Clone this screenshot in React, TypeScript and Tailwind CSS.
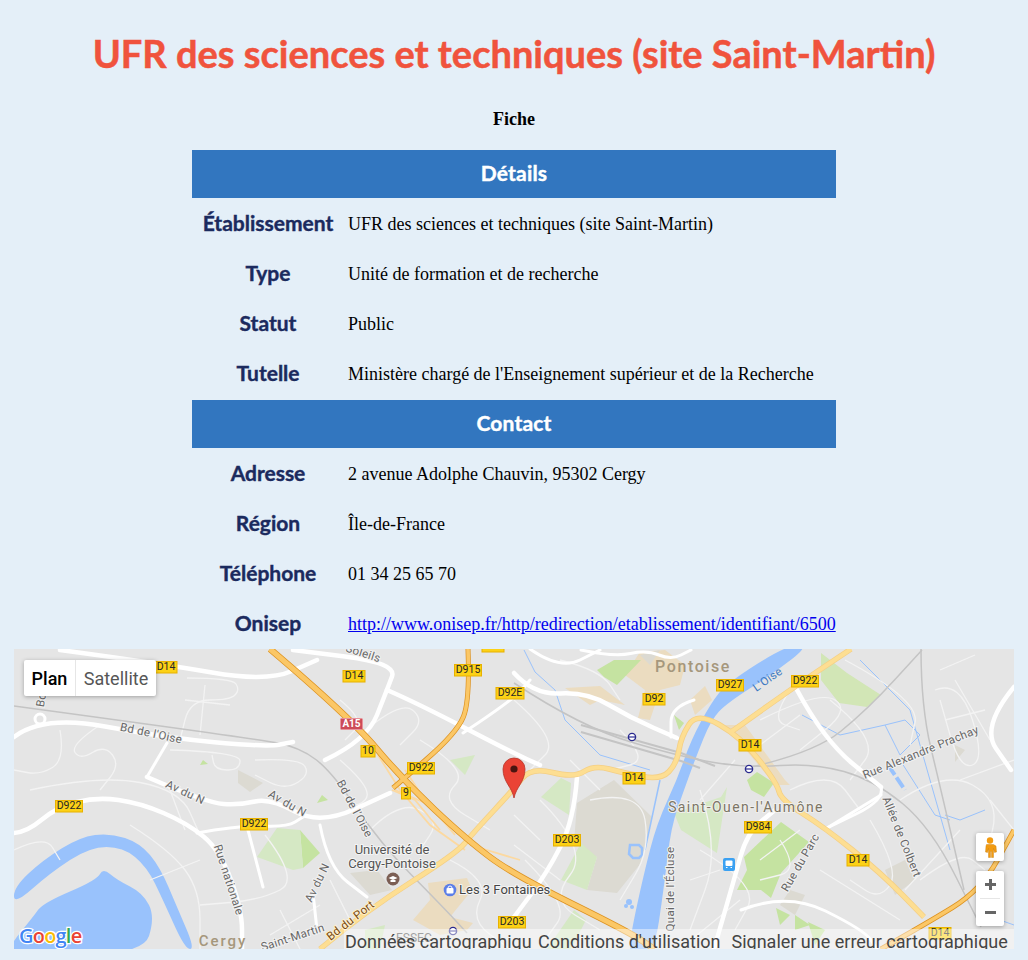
import React from "react";

const rows1 = [
  ["Établissement", "UFR des sciences et techniques (site Saint-Martin)"],
  ["Type", "Unité de formation et de recherche"],
  ["Statut", "Public"],
  ["Tutelle", "Ministère chargé de l'Enseignement supérieur et de la Recherche"],
];
const rows2 = [
  ["Adresse", "2 avenue Adolphe Chauvin, 95302 Cergy"],
  ["Région", "Île-de-France"],
  ["Téléphone", "01 34 25 65 70"],
];

// Turns "M x y L x y ..." map traces into smooth curves through segment midpoints.
function smooth(d: string) {
  return d
    .split("M")
    .filter(Boolean)
    .map((part) => {
      const closed = part.includes("Z");
      const pts = part
        .replace("Z", "")
        .split("L")
        .map((p) => p.trim().split(/\s+/).map(Number));
      if (pts.length < 3) return "M" + part;
      let out = closed
        ? `M${(pts[0][0] + pts[pts.length - 1][0]) / 2} ${(pts[0][1] + pts[pts.length - 1][1]) / 2}`
        : `M${pts[0][0]} ${pts[0][1]}`;
      const last = closed ? pts.length : pts.length - 1;
      for (let i = closed ? 0 : 1; i < last; i++) {
        const n = pts[(i + 1) % pts.length];
        out += `Q${pts[i][0]} ${pts[i][1]} ${(pts[i][0] + n[0]) / 2} ${(pts[i][1] + n[1]) / 2}`;
      }
      if (!closed) out += `L${pts[pts.length - 1][0]} ${pts[pts.length - 1][1]}`;
      else out += "Z";
      return out;
    })
    .join("");
}

const thin = [
  "M187 678L232 678L240 690L230 700L190 700L180 740", "M100 725L70 745L80 760L105 745L120 765L100 790", "M60 730L65 760L40 775L14 770", "M205 685L200 735M185 700L230 705",
  "M170 750L240 752L240 770L215 770L212 755", "M255 760L300 758L310 775L285 790L255 775", "M30 790L100 775L180 790L200 835", "M14 850L45 835L60 860M130 825L170 850L200 890L200 949",
  "M265 835L300 880L260 900L200 905", "M340 760L375 790L355 810L340 790M360 735L400 700L425 720L400 745", "M370 830L400 800L440 820L420 850", "M170 790L185 830M150 880L200 860",
  "M280 910L300 949M330 880L350 920M270 935L320 905", "M420 740L470 770L440 800L490 830", "M450 860L490 880L470 920L510 949", "M540 800L590 850L550 900L600 930", "M525 860L570 905L545 940", "M340 700L365 720L345 740",
  "M590 800L640 790L650 850L620 900", "M700 800L735 760M700 850L760 885L735 930", "M830 700L880 740L850 780M845 660L920 700L910 745", "M935 690L960 680L985 760L960 770L940 700", "M514 815L540 840M514 845L560 880",
  "M955 680L990 740M945 720L985 710", "M900 800L945 770L1000 800L985 860", "M870 820L900 870L880 900L850 880", "M760 720L820 690L850 710L800 750", "M790 790L830 770L860 810", "M820 870L900 920M905 890L960 830",
  "M960 780L1014 760M990 800L1014 830", "M514 700L560 740L530 770M560 660L600 670L620 700", "M620 730L650 760L610 770", "M700 790L720 850L690 930M740 900L680 949", "M600 790L570 760M690 880L720 870", "M780 840L800 870L760 880M760 860L800 830",
  "M790 690L770 720L800 730M760 745L800 715", "M940 670L975 655M920 880L960 850L985 870",
];

const whiteMain = [
  "M14 737L43 715L167 738L267 747L293 742", "M325 760L367 740L387 690L397 663L293 650", "M387 690L417 703L513 753L540 765", "M14 833L27 832L57 807L97 797L140 803L187 823L220 850L242 910L242 949", "M60 650L157 663L267 682L317 660",
  "M797 690L824 740L881 787", "M1014 687L981 727L1011 770", "M714 949L734 880L747 833L775 810", "M577 777L574 820L547 873L514 917", "M514 673L534 695L587 692L631 718L677 738", "M147 777L207 803L240 805L270 798L320 825L390 793",
];
const whiteMinor = [
  "M463 733L513 700L530 680", "M147 777L167 743", "M320 825L328 867L367 897", "M197 833L240 825L287 827L303 817", "M248 830L263 887", "M313 893L317 930",
  "M827 828L881 795", "M741 910L787 892L864 930L877 949", "M581 650L614 657L647 650L671 660L691 650", "M694 700L671 707L671 737", "M881 787L885 800L827 828", "M530 649L560 670L600 650",
];

const yellow = [
  "M320 949L367 910L457 853L473 833L513 790L531 767L574 778L594 765L624 773L661 780L677 763L681 737L697 712L741 737L777 783L781 800L824 827L881 873L924 917",
  "M731 732L794 687L851 649",
];

const shields: [string, number, number, number][] = [
  ["D14", 166, 667, 21], ["D14", 354, 676, 21], ["D915", 468, 670, 26], ["D92E", 510, 693, 27], ["D922", 69, 806, 26], ["D922", 254, 824, 26], ["D922", 421, 768, 26],
  ["10", 368, 751, 13], ["9", 406, 793, 8], ["D203", 512, 922, 26], ["D92", 654, 699, 21], ["D927", 730, 685, 26], ["D922", 805, 681, 26], ["D14", 750, 745, 21],
  ["D14", 634, 778, 21], ["D984", 758, 827, 26], ["D203", 567, 840, 26], ["D14", 858, 860, 21], ["D14", 940, 933, 21], ["D14", 493, 646, 21],
];

const labels: [string, number, number, number][] = [
  ["Bd de l'Oise", 151, 734, 12], ["Av du N", 185, 793, 25], ["Av du N", 287, 804, 30], ["Bd de l'Oise", 354, 809, 62], ["Rue nationale", 228, 880, 72], ["Av du N", 318, 883, -64],
  ["Saint-Martin", 293, 938, -18], ["Rue Alexandre Prachay", 921, 753, -22], ["Allée de Colbert", 901, 837, 68], ["Rue du Parc", 801, 863, -60], ["Quai de l'Écluse", 671, 889, -90], ["Bd", 42, 700, -80], ["Soleils", 363, 654, 18],
];

const motorway = [
  "M270 649L350 717L403 780L467 840L514 875L631 933L654 949",
  "M468 649L470 700L457 733L393 788",
  "M881 949L924 925L981 890L1014 830",
];

function MapArt() {
  return (
    <svg viewBox="14 649 1000 300" className="block w-full h-full" aria-hidden="true">
      <rect x="14" y="649" width="1000" height="300" fill="#e5e5e5" />
      {/* built-up areas */}
      <g fill="#ebdcc0">
        <path d="M640 652L665 650L685 665L680 685L660 690L650 720L638 718L645 690L625 675Z" />
        <path d="M565 688L600 686L625 705L600 700L590 705Z" />
        <path d="M690 700L705 686L712 700L695 715Z" />
        <path d="M428 883L467 878L472 890L450 917L473 923L467 930L440 935L413 920L430 900Z" />
        <path d="M725 725L745 725L785 780L790 785L775 785Z" />
      </g>
      <g fill="#dcdad2">
        <path d="M577 803L614 780L652 817L641 863L617 893L587 890L597 857L574 843Z" />
        <path d="M238 770L263 783L250 792L238 783Z" />
        <path d="M350 873L377 870L392 890L370 895Z" />
        <path d="M790 890L805 895L795 915L780 905Z" />
        <path d="M885 870L905 860L915 880L895 895Z" />
        <path d="M640 655L660 650L650 665Z" />
        <path d="M955 745L965 750L955 762Z" />
      </g>
      {/* parks */}
      <g fill="#c5e3a1">
        <path d="M597 670L614 660L641 660L617 685L604 677Z" />
        <path d="M781 822L809 842L781 873L771 898L761 890L737 890L747 870L744 857Z" />
        <path d="M300 830L320 853L303 868Z" />
        <path d="M747 780L757 772L774 783L764 797L751 790Z" />
        <path d="M674 715L684 723L679 730Z" />
        <path d="M203 760L208 764L200 765ZM322 795L328 800L317 803Z" />
        <path d="M776 908L790 915L780 925ZM795 915L810 925L795 930ZM808 922L825 930L815 945Z" />
      </g>
      <path d="M821 653L847 673L881 695L867 707L839 703L821 680Z" fill="#d2e6b6" />
      <g fill="#d5e8c4">
        <path d="M257 857L277 828L300 830L303 868L293 870Z" />
        <path d="M541 797L561 778L571 783L569 815Z" />
        <path d="M674 813L721 797L727 787L717 853L681 830Z" />
        <path d="M561 880L581 843L597 857L587 890Z" />
        <path d="M574 910L547 949L571 949L586 920Z" />
        <path d="M450 760L475 755L465 775Z" />
        <path d="M365 930L385 925L380 949L365 949Z" />
      </g>
      {/* water */}
      <g fill="#99c2fc">
        <path d={smooth("M14 887L43 860L80 837L110 833L140 843L160 867L177 907L195 949L185 949L163 900L147 867L123 847L90 847L50 873L14 905Z")} />
        <path d={smooth("M10 945L33 917L43 903L97 880L103 868L117 880L143 893L155 917L143 955L10 955Z")} />
        <path d={smooth("M787 645L727 683L711 703L691 740L677 780L657 823L644 873L631 933L629 955L654 955L664 887L671 827L684 790L696 757L711 720L727 703L774 673L810 645Z")} />
      </g>
      <g fill="none" stroke="#99c2fc" strokeWidth="1">
        <path d="M524 650L535 672L555 690L565 720L600 755L650 770" />
        <path d="M802 715L840 735L885 725L905 720L920 735L900 755L885 725" />
        <path d="M860 660L890 690L910 710L950 850M945 815L960 820L985 810" />
        <path d="M1000 920L1014 925" />
        <path d="M900 760L935 815L950 820" />
        <path d="M660 780L645 850" strokeWidth="1.5" />
      </g>
      <path d="M630 845h9l3 3v7l-3 3h-6l-4-4z" fill="none" stroke="#99c2fc" strokeWidth="2.5" />
      <circle cx="629" cy="902" r="3" fill="#99c2fc" />
      <circle cx="626" cy="906" r="2" fill="#99c2fc" /><circle cx="632" cy="907" r="2" fill="#99c2fc" />
      <path d="M888 765L905 790" stroke="#99c2fc" strokeWidth="4" strokeDasharray="12 3" fill="none" />
      {/* thin roads */}
      <g fill="none" stroke="#f3f3f3" strokeWidth="1.3">
        {thin.map((d, i) => <path key={i} d={smooth(d)} />)}
      </g>
      {/* railways */}
      <g fill="none" stroke="#c4c4c4" strokeWidth="1.5">
        <path d={smooth("M14 706L250 738L300 747L333 773L380 843L443 907L467 933")} />
        <path d={smooth("M514 683L581 727L681 757L747 768L814 763L874 780L931 827L981 927")} />
        <path d="M581 732L681 761L700 768M581 725L681 753L715 766" strokeWidth="2" />
        <path d={smooth("M921 649L921 707L941 790L964 890")} />
        <path d={smooth("M747 768L814 753L867 710L922 650")} />
      </g>
      {/* white roads */}
      <g fill="none" stroke="#ffffff" strokeLinejoin="round" strokeLinecap="round">
        {whiteMain.map((d, i) => <path key={i} d={smooth(d)} strokeWidth="4.5" />)}
        {whiteMinor.map((d, i) => <path key={i} d={smooth(d)} strokeWidth="3" />)}
      </g>
      <circle cx="40" cy="719" r="5" fill="none" stroke="#ffffff" strokeWidth="3" />
      {/* ramps */}
      <g fill="none" stroke="#fcd9a0" strokeWidth="1.8">
        <path d="M378 755L400 790L430 825L465 850M405 770L425 800L455 835M395 790L430 805L470 840" />
        <path d="M392 790L415 800L440 830M470 845L520 860" />
      </g>
      {/* arterial roads */}
      <g fill="none" strokeLinejoin="round">
        {yellow.map((d, i) => <path key={i} d={smooth(d)} stroke="#f4cf85" strokeWidth="5.5" />)}
        {yellow.map((d, i) => <path key={i} d={smooth(d)} stroke="#fdde92" strokeWidth="4" />)}
      </g>
      {/* motorway */}
      <g fill="none" strokeLinejoin="round">
        {motorway.map((d, i) => <path key={i} d={smooth(d)} stroke="#dd9322" strokeWidth={i === 0 ? 6.5 : 5} />)}
        {motorway.map((d, i) => <path key={i} d={smooth(d)} stroke="#fbc766" strokeWidth={i === 0 ? 5 : 3.6} />)}
      </g>
      {/* road labels */}
      <g fontFamily="Roboto, sans-serif" fontSize="11.5" fill="#666666" stroke="#f2f2f2" strokeWidth="2" paintOrder="stroke" textAnchor="middle" dominantBaseline="middle" letterSpacing="0.3">
        {labels.map(([t, x, y, r]) => (
          <text key={t + x} x={x} y={y} transform={`rotate(${r} ${x} ${y})`}>{t}</text>
        ))}
      </g>
      <text x="351" y="921" transform="rotate(-38 351 921)" fontFamily="Roboto, sans-serif" fontSize="11.5" fill="#7a4a10" stroke="#fdf0cf" strokeWidth="2" paintOrder="stroke" textAnchor="middle" dominantBaseline="middle" letterSpacing="0.3">Bd du Port</text>
      <text x="768" y="680" transform="rotate(-35 768 680)" fontFamily="Roboto, sans-serif" fontSize="11.5" fill="#3b78c2" textAnchor="middle" dominantBaseline="middle" letterSpacing="0.3">L'Oise</text>
      {/* shields */}
      <g>
        <rect x="340.5" y="718.5" width="22" height="11" rx="1" fill="#cd4b58" stroke="#e8919a" />
        <text x="351.5" y="724.5" fontFamily="Roboto, sans-serif" fontSize="10" fontWeight="700" fill="#ffffff" textAnchor="middle" dominantBaseline="middle">A15</text>
        {shields.map(([t, x, y, w]) => (
          <g key={t + x}>
            <rect x={x - w / 2 - 0.5} y={y - 5.5} width={w + 1} height="11.5" fill="#fcd116" stroke="#e8b100" strokeWidth="1" />
            <text x={x} y={y + 0.5} fontFamily="Roboto, sans-serif" fontSize="10.5" fill="#262626" textAnchor="middle" dominantBaseline="middle">{t}</text>
          </g>
        ))}
      </g>
      {/* places */}
      <text x="693" y="668" fontFamily="Roboto, sans-serif" fontSize="16" fill="#a5977c" fontWeight="500" letterSpacing="1.6" textAnchor="middle" dominantBaseline="middle">Pontoise</text>
      <text x="746" y="808" fontFamily="Roboto, sans-serif" fontSize="14" fill="#7c7566" letterSpacing="1.4" textAnchor="middle" dominantBaseline="middle" stroke="#f0efec" strokeWidth="2" paintOrder="stroke">Saint-Ouen-l'Aumône</text>
      <text x="223" y="942" fontFamily="Roboto, sans-serif" fontSize="15" fill="#a5977c" fontWeight="500" letterSpacing="1.9" textAnchor="middle" dominantBaseline="middle">Cergy</text>
      <g fontFamily="Roboto, sans-serif" fontSize="13" fill="#555555" textAnchor="middle" dominantBaseline="middle" stroke="#f4f4f4" strokeWidth="2" paintOrder="stroke">
        <text x="392" y="851">Université de</text>
        <text x="392" y="865">Cergy-Pontoise</text>
      </g>
      <text x="459" y="891" fontFamily="Roboto, sans-serif" fontSize="13" fill="#444444" dominantBaseline="middle" stroke="#f4f4f4" strokeWidth="2" paintOrder="stroke">Les 3 Fontaines</text>
      <text x="396" y="939" fontFamily="Roboto, sans-serif" fontSize="12" fill="#555555" dominantBaseline="middle">ESSEC</text>
      {/* pois */}
      <circle cx="393" cy="879" r="6.5" fill="#7b5e53" />
      <path d="M388.5 878L393 876L397.5 878L393 880Z" fill="#ffffff" /><path d="M390.5 880v2h5v-2" fill="#ffffff" />
      <circle cx="450" cy="890" r="6.3" fill="#5c7fe8" />
      <rect x="446.5" y="888" width="7" height="5.5" rx="1" fill="#ffffff" />
      <path d="M448 888a2 2 0 0 1 4 0" fill="none" stroke="#ffffff" />
      {[[632, 737], [749, 769], [453, 931]].map(([x, y]) => (
        <g key={x}>
          <circle cx={x} cy={y} r="3.6" fill="#ffffff" stroke="#2a2a8f" strokeWidth="1.4" />
          <path d={`M${x - 3} ${y}h6`} stroke="#2a2a8f" strokeWidth="1.2" />
        </g>
      ))}
      <rect x="723" y="858" width="12" height="13" rx="2" fill="#3ba1f2" />
      <rect x="725.5" y="860.5" width="7" height="5.5" rx="1" fill="#ffffff" />
      <path d="M726 867.5h1.5M730.5 867.5h1.5" stroke="#ffffff" strokeWidth="1.2" />
      {/* Google wordmark */}
      <text x="19" y="943" fontFamily="'Open Sans', sans-serif" fontSize="20" fontWeight="600" stroke="#ffffff" strokeWidth="2.5" paintOrder="stroke" letterSpacing="-0.8">
        <tspan fill="#4285f4">G</tspan><tspan fill="#ea4335">o</tspan><tspan fill="#fbbc05">o</tspan><tspan fill="#4285f4">g</tspan><tspan fill="#34a853">l</tspan><tspan fill="#ea4335">e</tspan>
      </text>
      {/* marker */}
      <path d="M514 798C512 787 503 782 503 769A11 11 0 0 1 525 769C525 782 516 787 514 798Z" fill="#ea4335" stroke="#b5352a" strokeWidth="0.8" />
      <circle cx="514" cy="769" r="3.6" fill="#4a1510" />
    </svg>
  );
}

function Row({ k, v, link }: { k: string; v: string; link?: boolean }) {
  return (
    <tr className="h-[50px]">
      <th className="text-center align-middle p-0 pb-[2px] font-['Lato',sans-serif] font-bold text-[21px] text-[#1b2a5e] [-webkit-text-stroke:0.4px_#1b2a5e]">{k}</th>
      <td className="align-middle p-0 pl-[4px] whitespace-nowrap">
        {link ? <a href="#" className="text-[#0000ee] underline">{v}</a> : v}
      </td>
    </tr>
  );
}

function Head({ t }: { t: string }) {
  return (
    <tr className="h-[48px]">
      <th colSpan={2} className="bg-[#3276bf] p-0 pb-[2px] text-center align-middle font-['Lato',sans-serif] font-bold text-[21px] tracking-[0.2px] text-white [-webkit-text-stroke:0.4px_#ffffff]">{t}</th>
    </tr>
  );
}

export default function App() {
  return (
    <div className="min-h-[960px] bg-[#e4eff8] font-['Liberation_Serif',serif] text-[18px] text-black overflow-hidden">
      <h1 className="pt-[29px] h-[102px] text-center font-['Lato',sans-serif] font-bold text-[38px] leading-[48px] text-[#f0533d] [-webkit-text-stroke:0.5px_#f0533d]">
        UFR des sciences et techniques (site Saint-Martin)
      </h1>
      <table className="mx-auto w-[644px] border-collapse table-fixed">
        <caption className="h-[48px] pt-[5px] text-[18px] leading-[24px] font-bold text-center">Fiche</caption>
        <colgroup>
          <col className="w-[152px]" />
          <col />
        </colgroup>
        <tbody>
          <Head t="Détails" />
          <tr className="h-px" />
          {rows1.map(([k, v]) => <Row key={k} k={k} v={v} />)}
          <tr className="h-px" />
          <Head t="Contact" />
          <tr className="h-px" />
          {rows2.map(([k, v]) => <Row key={k} k={k} v={v} />)}
          <Row k="Onisep" v="http://www.onisep.fr/http/redirection/etablissement/identifiant/6500" link />
        </tbody>
      </table>
      <div className="relative mx-auto h-[300px] w-[1000px] overflow-hidden font-['Roboto',sans-serif]">
        <MapArt />
        <div className="absolute left-[10px] top-[11px] flex h-[36px] w-[132px] rounded-[2px] bg-white text-[18px] shadow-[0_1px_4px_rgba(0,0,0,0.3)]">
          <div className="flex w-[52px] items-center justify-center border-r border-[#e6e6e6] font-medium text-black">Plan</div>
          <div className="flex flex-1 items-center justify-center text-[#565656]">Satellite</div>
        </div>
        <div className="absolute bottom-0 right-0 h-[20px] w-[670px] bg-[rgba(255,255,255,0.45)]" />
        <div className="absolute bottom-[-3px] left-[331px] flex h-[21px] items-start text-[18px] leading-[21px] whitespace-nowrap text-[#444444]">
          <span className="mr-[6px] w-[187px] overflow-hidden">Données cartographiques</span>
          <span className="mr-[11px]">Conditions d'utilisation</span>
          <span>Signaler une erreur cartographique</span>
        </div>
        <div className="absolute left-[962px] top-[184px] flex h-[28px] w-[28px] items-center justify-center rounded-[2px] bg-white shadow-[0_1px_4px_rgba(0,0,0,0.3)]">
          <svg width="14" height="21" viewBox="0 0 14 21" aria-hidden="true">
            <circle cx="7" cy="3.5" r="3.2" fill="#f29b11" />
            <path d="M3.5 7.5h7l2.5 1.5 .5 6-2 .5-1-4v9h-2v-6h-1v6h-2v-9l-1 4-2-.5 .5-6z" fill="#f29b11" stroke="#c67a08" strokeWidth="0.4" />
          </svg>
        </div>
        <div className="absolute left-[962px] top-[222px] flex h-[55px] w-[28px] flex-col items-center rounded-[2px] bg-white shadow-[0_1px_4px_rgba(0,0,0,0.3)]">
          <div className="flex h-[27px] w-full items-center justify-center">
            <svg width="11" height="11" viewBox="0 0 11 11" aria-hidden="true"><path d="M4 0h3v4h4v3h-4v4h-3v-4h-4v-3h4z" fill="#666666" /></svg>
          </div>
          <div className="h-px w-[20px] bg-[#e6e6e6]" />
          <div className="flex h-[27px] w-full items-center justify-center">
            <svg width="11" height="3" viewBox="0 0 11 3" aria-hidden="true"><rect width="11" height="3" fill="#666666" /></svg>
          </div>
        </div>
      </div>
    </div>
  );
}
